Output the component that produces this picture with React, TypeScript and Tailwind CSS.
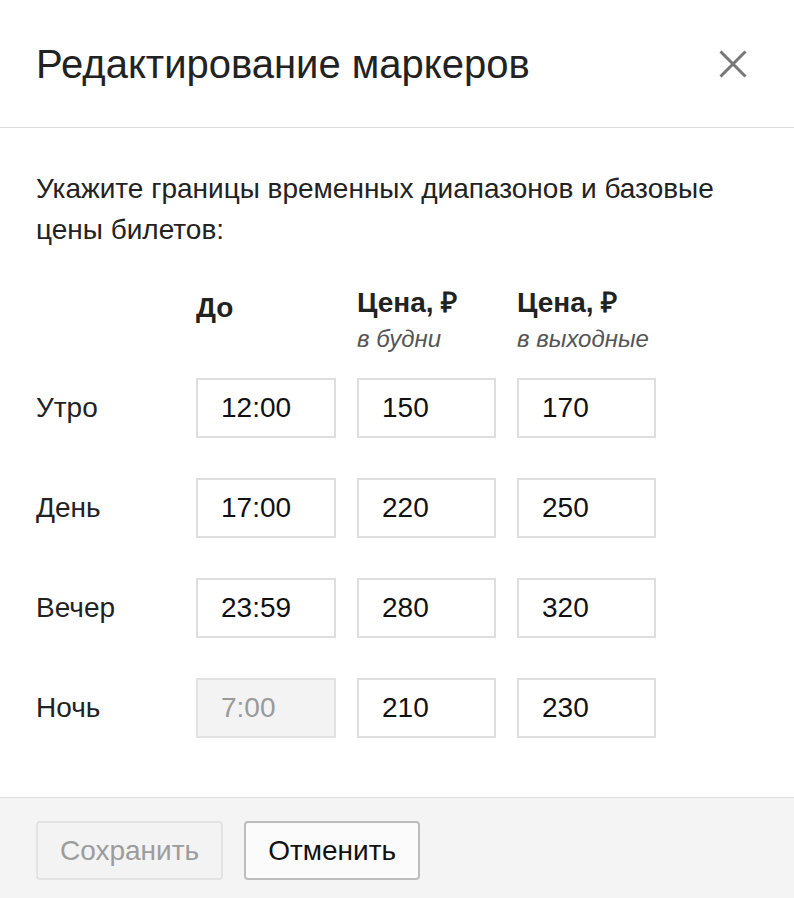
import React from 'react';

interface Row {
  label: string;
  until: string;
  weekday: string;
  weekend: string;
  locked?: boolean;
}

const rows: Row[] = [
  { label: 'Утро', until: '12:00', weekday: '150', weekend: '170' },
  { label: 'День', until: '17:00', weekday: '220', weekend: '250' },
  { label: 'Вечер', until: '23:59', weekday: '280', weekend: '320' },
  { label: 'Ночь', until: '7:00', weekday: '210', weekend: '230', locked: true },
];

const Field: React.FC<{ value: string; disabled?: boolean }> = ({ value, disabled }) => (
  <input
    defaultValue={value}
    disabled={disabled}
    className={
      'h-[60px] w-full border-2 pl-[23px] text-[28px] outline-none ' +
      (disabled
        ? 'border-[#e2e2e2] bg-[#f3f3f3] text-[#9a9a9a]'
        : 'border-[#dedede] bg-white text-[#111]')
    }
  />
);

export default function App() {
  return (
    <div className="flex h-[898px] w-[794px] flex-col bg-white font-['Liberation_Sans',Arial,sans-serif] text-[#222]">
      <div className="flex h-[128px] shrink-0 items-center justify-between border-b border-[#dcdcdc] pl-9 pr-[47px]">
        <h1 className="text-[40px] leading-none">Редактирование маркеров</h1>
        <button className="flex h-[28px] w-[28px] items-center justify-center" aria-label="Закрыть">
          <svg width="28" height="28" viewBox="0 0 28 28">
            <path d="M1.5 1.5L26.5 26.5M26.5 1.5L1.5 26.5" stroke="#777" strokeWidth="3" fill="none" />
          </svg>
        </button>
      </div>

      <div className="flex-1 px-9 pt-10">
        <p className="text-[28px] leading-[41px]">
          Укажите границы временных диапазонов и базовые
          <br />
          цены билетов:
        </p>

        <div className="mt-[33px] grid grid-cols-[139px_140px_139px_139px] gap-x-[21px]">
          <div />
          <div className="pt-[5px] text-[28px] font-bold leading-[40px]">До</div>
          <div>
            <div className="text-[28px] font-bold leading-[40px]">Цена, ₽</div>
            <div className="text-[24px] italic leading-[32px] text-[#555]">в будни</div>
          </div>
          <div>
            <div className="text-[28px] font-bold leading-[40px]">Цена, ₽</div>
            <div className="text-[24px] italic leading-[32px] text-[#555]">в выходные</div>
          </div>
        </div>

        <div className="mt-[23px] grid grid-cols-[139px_140px_139px_139px] gap-x-[21px] gap-y-10">
          {rows.map((r) => (
            <React.Fragment key={r.label}>
              <div className="flex items-center text-[28px]">{r.label}</div>
              <Field value={r.until} disabled={r.locked} />
              <Field value={r.weekday} />
              <Field value={r.weekend} />
            </React.Fragment>
          ))}
        </div>
      </div>

      <div className="flex h-[101px] shrink-0 items-start gap-[21px] border-t border-[#dcdcdc] bg-[#f4f4f4] px-9 pt-[23px]">
        <button
          disabled
          className="h-[59px] rounded-[4px] border-2 border-[#e3e3e3] bg-[#f3f3f3] px-[22px] text-[28px] text-[#9c9c9c]"
        >
          Сохранить
        </button>
        <button className="h-[59px] rounded-[4px] border-2 border-[#bdbdbd] bg-[#fbfbfb] px-[22px] text-[28px] text-[#111]">
          Отменить
        </button>
      </div>
    </div>
  );
}
